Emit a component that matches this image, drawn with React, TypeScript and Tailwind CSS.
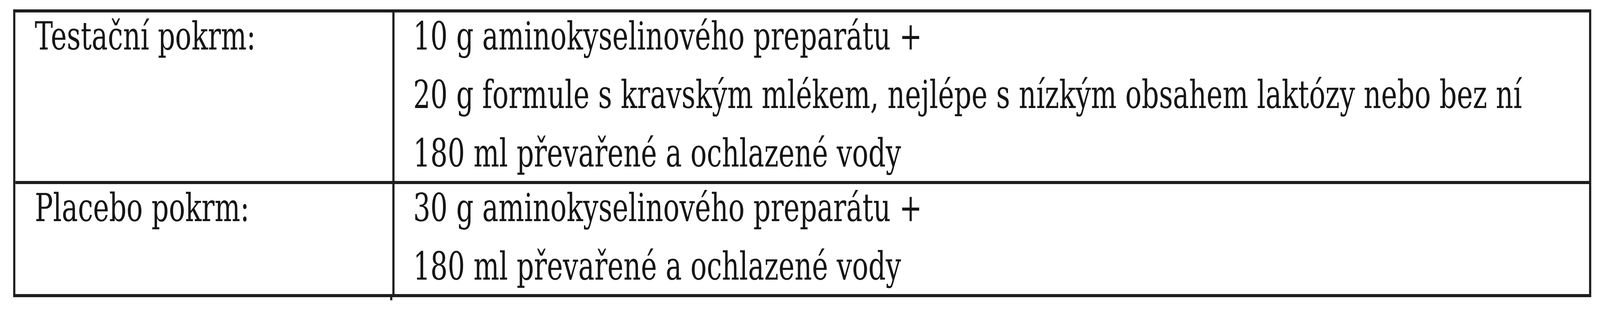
import { useEffect, useState } from "react";

// Table of test and placebo meals.
// Laid out on a 5840px wide sheet; the sheet is squeezed to the window's
// width so the whole table stays in view when the window is narrower.
const SHEET_W = 5840;

const ROWS = [
  {
    label: "Testační pokrm:",
    lines: [
      "10 g aminokyselinového preparátu +",
      "20 g formule s kravským mlékem, nejlépe s nízkým obsahem laktózy nebo bez ní",
      "180 ml převařené a ochlazené vody",
    ],
  },
  {
    label: "Placebo pokrm:",
    lines: ["30 g aminokyselinového preparátu +", "180 ml převařené a ochlazené vody"],
  },
];

export default function App() {
  const [sx, setSx] = useState(() => Math.min(1, window.innerWidth / SHEET_W));

  useEffect(() => {
    const onResize = () => setSx(Math.min(1, window.innerWidth / SHEET_W));
    window.addEventListener("resize", onResize);
    return () => window.removeEventListener("resize", onResize);
  }, []);

  return (
    <div className="w-screen h-[800px] overflow-hidden bg-white">
      <div
        className="w-[5840px] h-[800px] origin-top-left pt-[24px] pl-[48px] font-['DejaVu_Serif',serif] text-[99px] leading-[150px] text-[#151515]"
        style={{ transform: `scaleX(${sx})` }}
      >
        <div className="w-[5760px] border-[8px] border-[#1e1e1e]">
          {ROWS.map((row, i) => (
            <div
              key={row.label}
              className={`flex ${i < ROWS.length - 1 ? "border-b-[8px] border-[#1e1e1e]" : ""}`}
            >
              <div className="w-[1384px] shrink-0 border-r-[8px] border-[#1e1e1e] pl-[71px]">
                <div className="-mt-[14px] -mb-[4px] whitespace-nowrap">{row.label}</div>
              </div>
              <div className="flex-1 pl-[68px]">
                <div className="-mt-[14px] -mb-[4px]">
                  {row.lines.map((line) => (
                    <div key={line} className="whitespace-nowrap">
                      {line}
                    </div>
                  ))}
                </div>
              </div>
            </div>
          ))}
        </div>
        {/* divider stub below the bottom border */}
        <div className="ml-[1376px] w-[8px] h-[8px] bg-[#1e1e1e]" />
      </div>
    </div>
  );
}
